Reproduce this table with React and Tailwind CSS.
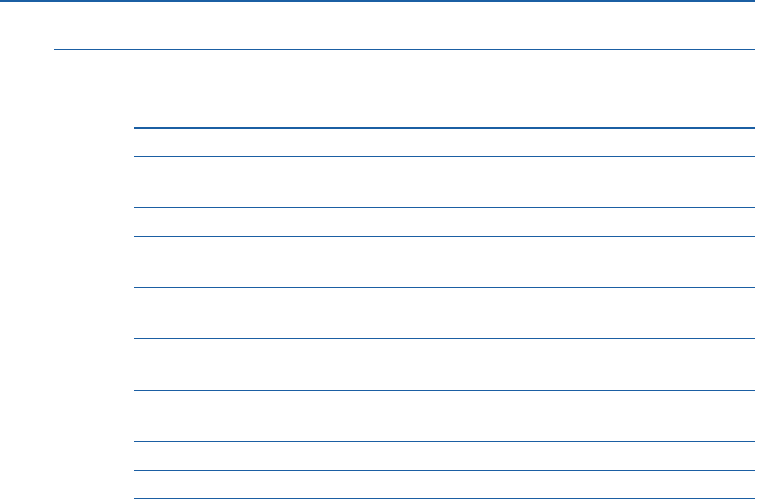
import React from 'react';

const rows = ['h-[28px]', 'h-[51px]', 'h-[29px]', 'h-[51px]', 'h-[51px]', 'h-[52px]', 'h-[51px]', 'h-[29px]', 'h-[28px]'];

const App = () => {
  return (
    <div className="w-[757px] h-[499px] bg-white overflow-hidden font-['Liberation_Sans',sans-serif]">
      <div className="w-[755px]">
        {/* header rule */}
        <div className="h-[49px] border-t-2 border-[#1b5fa3]"></div>
        <div className="ml-[54px] h-[78px] border-t border-[#1b5fa3]"></div>

        {/* table */}
        <div className="ml-[134px] border-t-2 border-[#1b5fa3]">
          {rows.map((h, i) => (
            <div key={i} className={`${h} border-b border-[#1b5fa3]`}></div>
          ))}
        </div>
      </div>
    </div>
  );
};

export default App;
